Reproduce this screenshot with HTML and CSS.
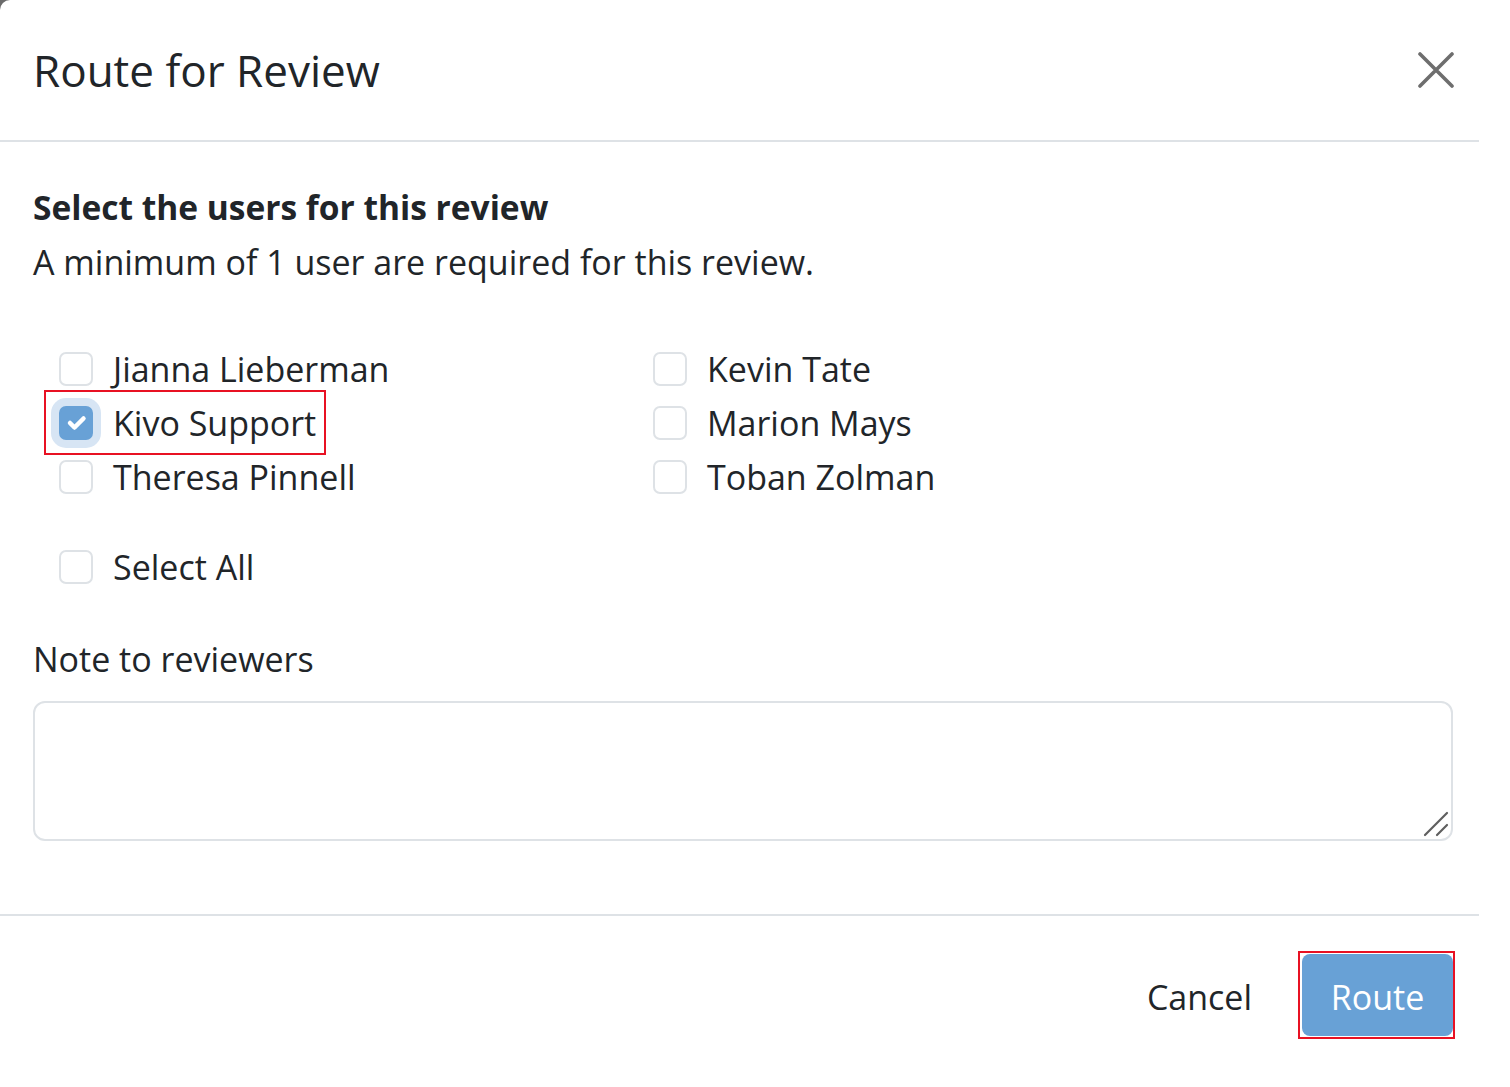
FILE: index.html
```html
<!DOCTYPE html>
<html lang="en">
<head>
    <meta charset="UTF-8">
    <meta name="viewport" content="width=device-width, initial-scale=1.0">
    <title>Route for Review</title>
    <link rel="stylesheet" href="styles.css">
</head>
<body>
    <div class="backdrop">
        <div class="modal">
            <div class="modal-header">
                <h2 class="modal-title">Route for Review</h2>
                <button class="close-btn" type="button" aria-label="Close">
                    <svg width="36" height="36" viewBox="0 0 36 36">
                        <path d="M2 2 L34 34 M34 2 L2 34" stroke="#6e6e6e" stroke-width="3.6" stroke-linecap="round" fill="none"/>
                    </svg>
                </button>
            </div>
            <div class="modal-body">
                <h3 class="section-title">Select the users for this review</h3>
                <p class="section-hint">A minimum of 1 user are required for this review.</p>

                <div class="user-grid">
                    <label class="check"><input type="checkbox"><span>Jianna Lieberman</span></label>
                    <label class="check"><input type="checkbox"><span>Kevin Tate</span></label>
                    <label class="check highlight"><input type="checkbox" class="focused" checked><span>Kivo Support</span></label>
                    <label class="check"><input type="checkbox"><span>Marion Mays</span></label>
                    <label class="check"><input type="checkbox"><span>Theresa Pinnell</span></label>
                    <label class="check"><input type="checkbox"><span>Toban Zolman</span></label>
                </div>

                <div class="select-all">
                    <label class="check"><input type="checkbox"><span>Select All</span></label>
                </div>

                <label class="note-label" for="note">Note to reviewers</label>
                <div class="note-wrap">
                    <textarea id="note" class="note"></textarea>
                    <svg class="grip" width="26" height="26" viewBox="0 0 26 26">
                        <path d="M2 24 L24 2 M14 24 L24 14" stroke="#5f5f5f" stroke-width="2.2" stroke-linecap="round" fill="none"/>
                    </svg>
                </div>
            </div>
            <div class="modal-footer">
                <button type="button" class="btn-cancel">Cancel</button>
                <span class="route-frame"><button type="button" class="btn-route">Route</button></span>
            </div>
        </div>
    </div>
</body>
</html>
```

FILE: styles.css
```css
body {
    margin: 0;
    background-color: #ffffff;
    font-family: 'Open Sans', 'Noto Sans', sans-serif;
    color: #212529;
}
.backdrop {
    width: 1479px;
    background-color: #6b6b6b; /* dim page peeking at the corner */
}
.modal {
    background-color: #ffffff;
    border-top-left-radius: 10px;
}
.modal-header {
    height: 140px;
    display: flex;
    align-items: center;
    justify-content: space-between;
    padding: 0 25px 0 33px;
    border-bottom: 2px solid #dee2e6;
}
.modal-title {
    margin: 0;
    font-size: 44px;
    font-weight: 400;
}
.close-btn {
    background: none;
    border: none;
    padding: 0;
    cursor: pointer;
    display: flex;
}
.modal-body {
    padding: 40px 26px 73px 33px;
}
.section-title {
    margin: 0;
    font-size: 33.5px;
    font-weight: 700;
    line-height: 50px;
}
.section-hint {
    margin: 5px 0 0;
    font-size: 34px;
    line-height: 50px;
}
.user-grid {
    margin-top: 55px;
    padding-left: 26px;
    display: grid;
    grid-template-columns: 594px 1fr;
    grid-auto-rows: 54px;
}
.check {
    display: inline-flex;
    align-items: center;
    justify-self: start;
    gap: 20px;
    font-size: 34px;
    cursor: pointer;
    position: relative;
}
.check input {
    appearance: none;
    -webkit-appearance: none;
    margin: 0;
    width: 34px;
    height: 34px;
    border: 2px solid #dee2e6;
    border-radius: 7px;
    background-color: #ffffff;
    flex-shrink: 0;
}
.check input:checked {
    background-color: #68a1d6;
    border-color: #68a1d6;
    background-image: url("data:image/svg+xml,%3csvg xmlns='http://www.w3.org/2000/svg' viewBox='0 0 20 20'%3e%3cpath fill='none' stroke='%23fff' stroke-linecap='round' stroke-linejoin='round' stroke-width='3' d='M6 10l3 3l6-6'/%3e%3c/svg%3e");
    background-size: 100%;
}
.check input.focused {
    box-shadow: 0 0 0 8px #d7e5f4;
}
.highlight::after {
    content: "";
    position: absolute;
    left: -15px;
    right: -10px;
    top: -6px;
    bottom: -5px;
    border: 2px solid #e81123;
}
.select-all {
    margin-top: 36px;
    padding-left: 26px;
    height: 54px;
    display: flex;
    align-items: center;
}
.note-label {
    display: block;
    margin-top: 40px;
    font-size: 34px;
    line-height: 50px;
}
.note-wrap {
    position: relative;
    margin-top: 17px;
}
.note {
    display: block;
    box-sizing: border-box;
    width: 100%;
    height: 140px;
    border: 2px solid #dee2e6;
    border-radius: 12px;
    font-family: inherit;
    font-size: 34px;
    resize: none;
}
.grip {
    position: absolute;
    right: 4px;
    bottom: 4px;
}
.modal-footer {
    border-top: 2px solid #dee2e6;
    display: flex;
    justify-content: flex-end;
    align-items: center;
    gap: 46px;
    padding: 35px 24px 48px;
}
.btn-cancel {
    background: none;
    border: none;
    padding: 4px 0 0;
    font-family: inherit;
    font-size: 34px;
    color: #212529;
    cursor: pointer;
}
.route-frame {
    display: flex;
    padding: 1px 0 1px 2px;
    border: 2px solid #e81123;
}
.btn-route {
    width: 151px;
    height: 82px;
    padding-top: 4px;
    background-color: #68a1d6;
    color: #ffffff;
    border: none;
    border-radius: 8px;
    font-family: inherit;
    font-size: 34px;
    cursor: pointer;
}
```
